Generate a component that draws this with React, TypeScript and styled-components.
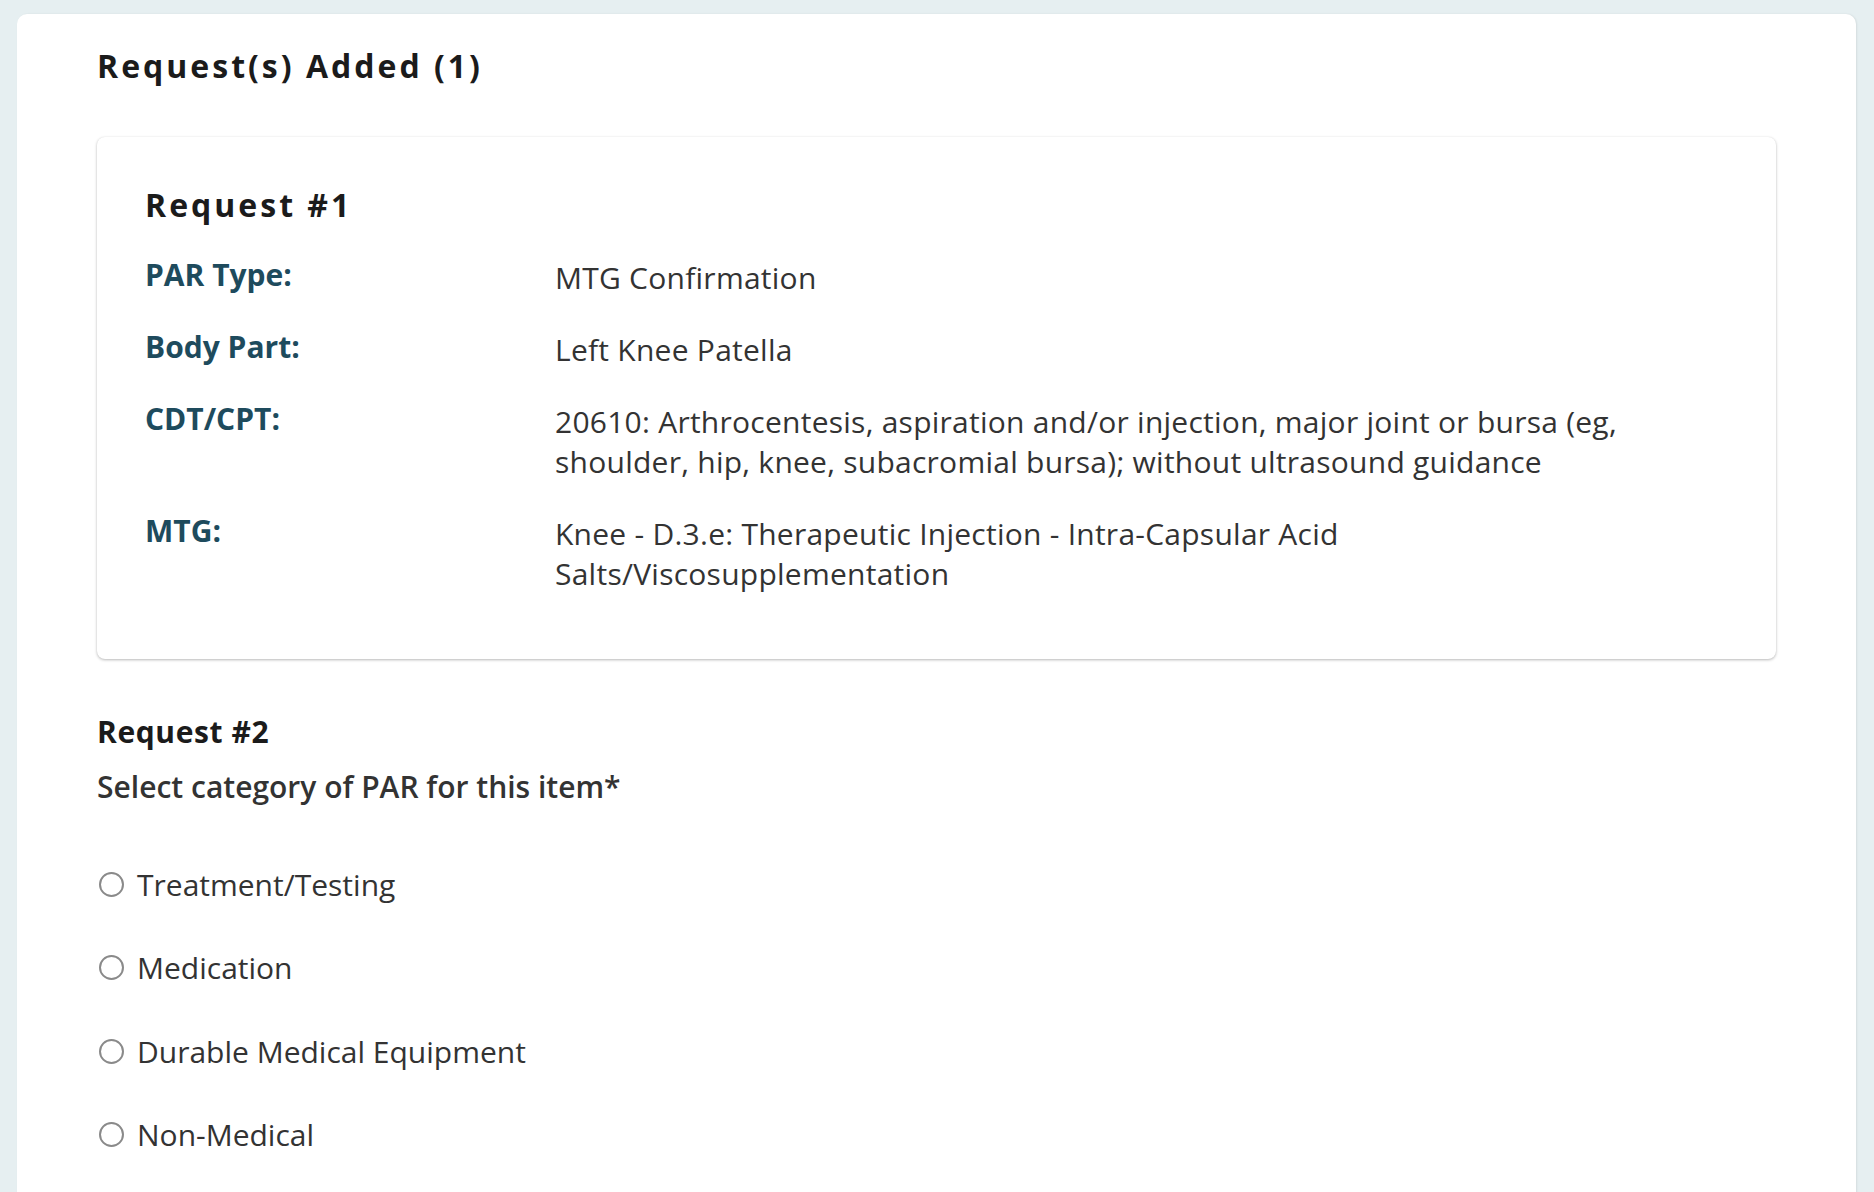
import React from "react";
import styled, { createGlobalStyle } from "styled-components";

const GlobalStyle = createGlobalStyle`
  html, body {
    margin: 0;
    padding: 0;
    background: #e6eff1;
    font-family: "Open Sans", "Liberation Sans", sans-serif;
    color: #333333;
  }
  * { box-sizing: border-box; }
`;

const Page = styled.div`
  padding: 14px 18px 0 17px;
  min-height: 1192px;
`;

const OuterCard = styled.section`
  background: #ffffff;
  border-radius: 10px 10px 0 0;
  box-shadow: 1px 0 2px rgba(0, 0, 0, 0.08);
  padding: 32px 80px 60px 80px;
  min-height: 1178px;
`;

const PageTitle = styled.h2`
  margin: 0;
  font-size: 32px;
  line-height: 40px;
  font-weight: 700;
  letter-spacing: 3px;
  color: #1b1b1b;
`;

const RequestCard = styled.div`
  margin-top: 51px;
  background: #ffffff;
  border-radius: 8px;
  box-shadow: 0 1px 3px rgba(0, 0, 0, 0.28), 0 0 1px rgba(0, 0, 0, 0.06);
  padding: 48px 48px 33px 48px;
`;

const CardTitle = styled.h3`
  margin: 0 0 33px 0;
  font-size: 32px;
  line-height: 40px;
  font-weight: 700;
  letter-spacing: 3px;
  color: #1b1b1b;
`;

const DetailRow = styled.div`
  display: grid;
  grid-template-columns: 410px minmax(0, 1120px);
  margin-bottom: 32px;
`;

const Label = styled.div`
  font-size: 30px;
  line-height: 34px;
  font-weight: 700;
  color: #1e4b5d;
`;

const Value = styled.div`
  font-size: 30px;
  line-height: 40px;
  font-weight: 400;
  letter-spacing: 0.25px;
  color: #333333;
`;

const SubHeading = styled.h4`
  margin: 53.5px 0 0 0;
  font-size: 30px;
  line-height: 37.5px;
  font-weight: 700;
  letter-spacing: 0.6px;
  color: #1b1b1b;
`;

const Prompt = styled.p`
  margin: 17.5px 0 0 0;
  font-size: 30px;
  line-height: 37.5px;
  font-weight: 600;
  color: #333333;
`;

const RadioList = styled.div`
  margin-top: 60.5px;
  display: flex;
  flex-direction: column;
  gap: 46px;
`;

const RadioLabel = styled.label`
  display: flex;
  align-items: center;
  gap: 13px;
  font-size: 30px;
  line-height: 37.5px;
  color: #333333;
  cursor: pointer;
`;

const RadioInput = styled.input`
  appearance: none;
  margin: 0 0 0 2px;
  width: 25px;
  height: 25px;
  border: 2px solid #8a8a8a;
  border-radius: 50%;
  background: #ffffff;
  flex: none;
`;

const details = [
  { label: "PAR Type:", value: "MTG Confirmation" },
  { label: "Body Part:", value: "Left Knee Patella" },
  {
    label: "CDT/CPT:",
    value:
      "20610: Arthrocentesis, aspiration and/or injection, major joint or bursa (eg, shoulder, hip, knee, subacromial bursa); without ultrasound guidance",
  },
  {
    label: "MTG:",
    value:
      "Knee - D.3.e: Therapeutic Injection - Intra-Capsular Acid Salts/Viscosupplementation",
  },
];

const categories = [
  "Treatment/Testing",
  "Medication",
  "Durable Medical Equipment",
  "Non-Medical",
];

export default function App() {
  return (
    <>
      <GlobalStyle />
      <Page>
        <OuterCard>
          <PageTitle>Request(s) Added (1)</PageTitle>
          <RequestCard>
            <CardTitle>Request #1</CardTitle>
            {details.map((d) => (
              <DetailRow key={d.label}>
                <Label>{d.label}</Label>
                <Value>{d.value}</Value>
              </DetailRow>
            ))}
          </RequestCard>
          <SubHeading>Request #2</SubHeading>
          <Prompt>Select category of PAR for this item*</Prompt>
          <RadioList>
            {categories.map((c) => (
              <RadioLabel key={c}>
                <RadioInput type="radio" name="category" value={c} />
                {c}
              </RadioLabel>
            ))}
          </RadioList>
        </OuterCard>
      </Page>
    </>
  );
}
